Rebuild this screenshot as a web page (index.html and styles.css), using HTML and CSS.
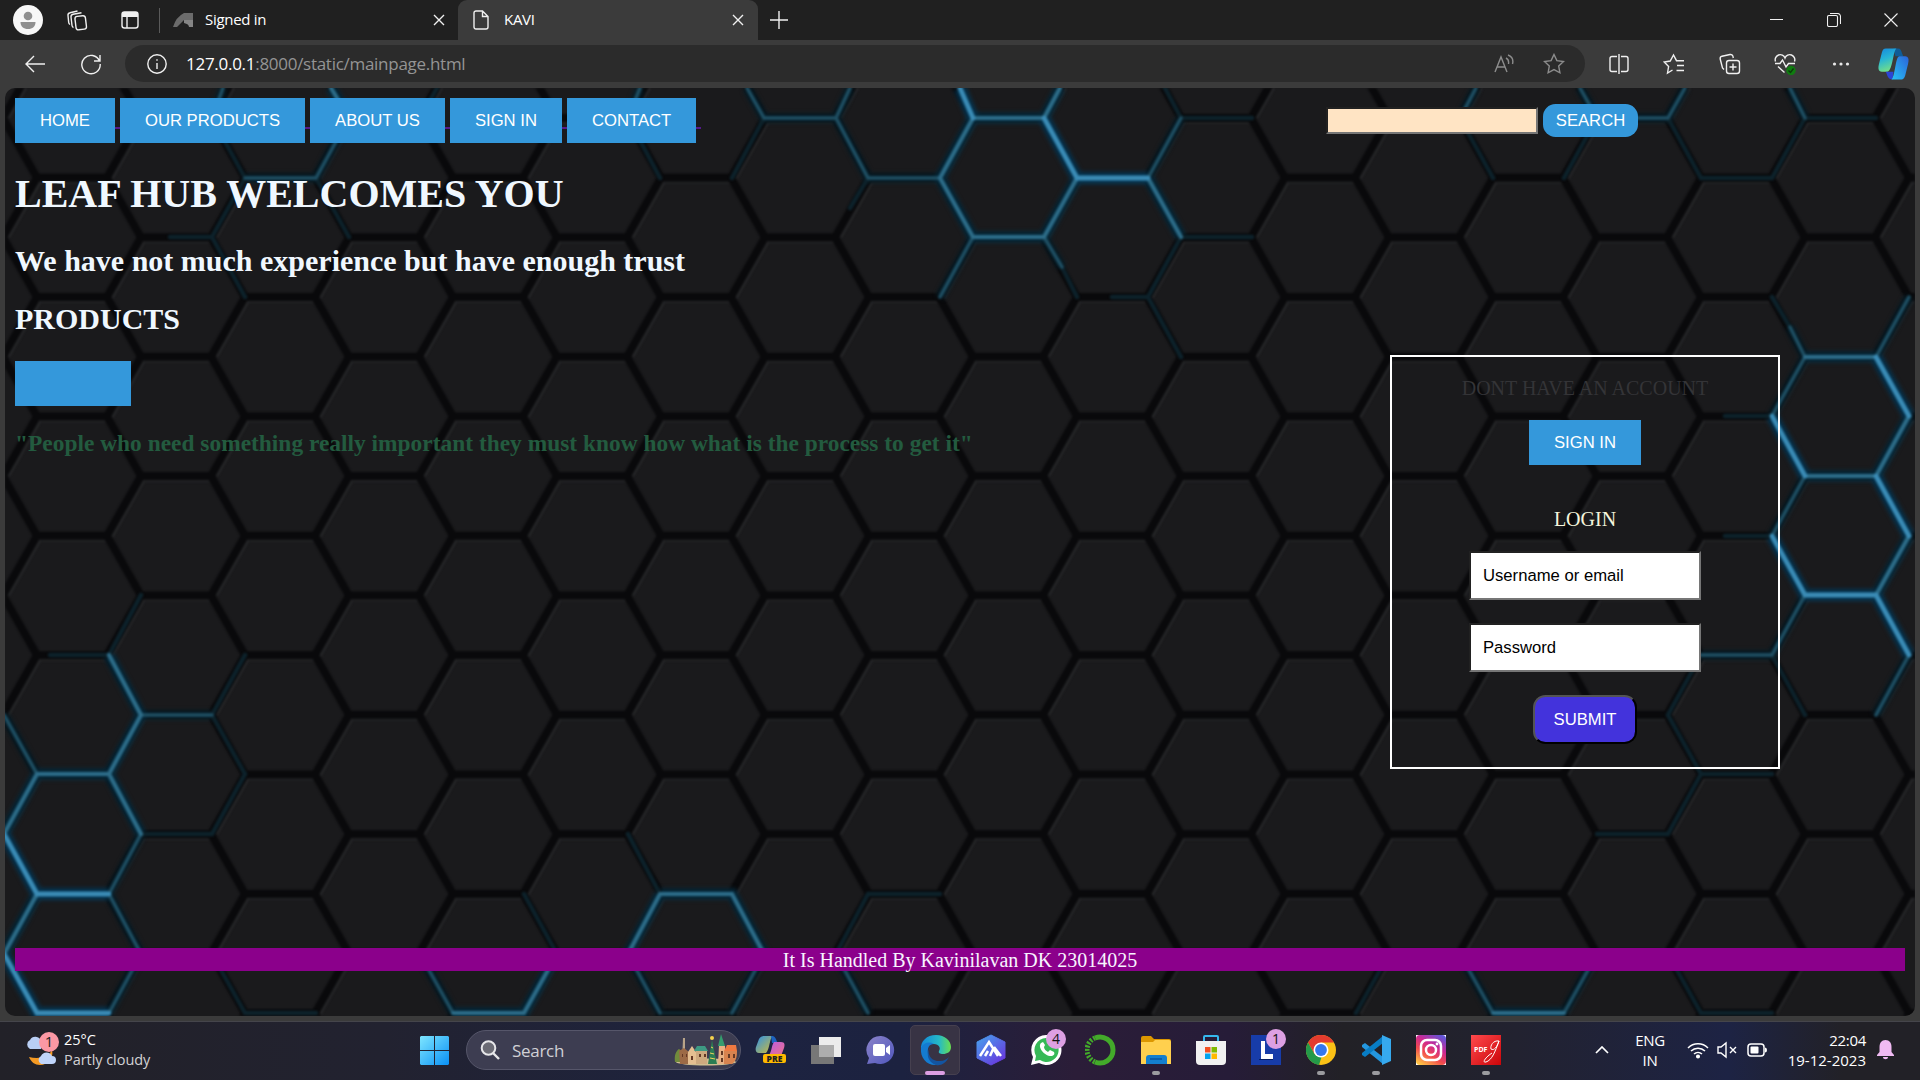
FILE: index.html
```html
<!DOCTYPE html>
<html lang="en">
<head>
<meta charset="utf-8">
<title>KAVI</title>
<link rel="stylesheet" href="styles.css">
</head>
<body>
<div class="screen">
  <div class="titlebar">
    <div class="cell avatar-cell"><svg width="30" height="30" viewBox="0 0 30 30"><circle cx="15" cy="15" r="15" fill="#f7f7f7"/><circle cx="15" cy="11" r="4.3" fill="#8f8f8f"/><path d="M7.5 17h15c0 4.500-3 7-7.500 7s-7.500-2.500-7.500-7z" fill="#8f8f8f"/></svg></div>
    <div class="cell ws-cell"><svg class="line" width="22" height="22" viewBox="0 0 22 22"><rect x="9.500" y="7" width="10.500" height="13.500" rx="2.500" transform="rotate(-7 15 14)"/><path d="M7.500 18.500a2.500 2.500 0 0 1-1.500-2L5 8a2.500 2.500 0 0 1 2-2.700l8.500-1.600M4 15.500a2.500 2.500 0 0 1-1.300-2L2 6.500a2.500 2.500 0 0 1 2-2.800L11.500 2"/></svg></div>
    <div class="cell ta-cell"><svg class="line" width="20" height="20" viewBox="0 0 20 20"><rect x="2" y="2" width="16" height="16" rx="2.500"/><path d="M2 4.500h16" stroke-width="5"/><path d="M7 5v13"/></svg></div>
    <div class="tab idle"><svg width="21" height="16" viewBox="0 0 21 16"><path d="M0 15Q3 5 11 1h9v7h-9L4 15z" fill="#6b6b6b"/><path d="M11 8h9v7h-4q0-3-5-4z" fill="#858585"/></svg><span>Signed in</span><svg class="line x" width="12" height="12" viewBox="0 0 12 12"><path d="M1 1l10 10M11 1L1 11"/></svg></div>
    <div class="tab active"><svg class="line" width="16" height="20" viewBox="0 0 16 20"><path d="M3 1h6.500L15 6.500V17a2 2 0 0 1-2 2H3a2 2 0 0 1-2-2V3a2 2 0 0 1 2-2zM9.500 1v5.500H15"/></svg><span>KAVI</span><svg class="line x" width="12" height="12" viewBox="0 0 12 12"><path d="M1 1l10 10M11 1L1 11"/></svg></div>
    <div class="cell plus"><svg class="line" width="18" height="18" viewBox="0 0 18 18"><path d="M9 0v18M0 9h18"/></svg></div>
    <div class="winctl">
      <div class="cell"><svg class="line sharp" width="14" height="14" viewBox="0 0 14 14"><path d="M0 6.500h13"/></svg></div>
      <div class="cell"><svg class="line thin" width="14" height="14" viewBox="0 0 14 14"><rect x=".5" y="2.500" width="10" height="11" rx="1.500"/><path d="M3 .5h7.500a3 3 0 0 1 3 3V11"/></svg></div>
      <div class="cell"><svg class="line thin" width="14" height="14" viewBox="0 0 14 14"><path d="M.5.5l13 13M13.500.5l-13 13"/></svg></div>
    </div>
  </div>

  <div class="toolbar">
    <div class="cell back"><svg class="line" width="20" height="18" viewBox="0 0 20 18"><path d="M9 1L1 9l8 8M1 9h19"/></svg></div>
    <div class="cell reload"><svg class="line" width="22" height="22" viewBox="0 0 22 22"><path d="M19.500 8A9.200 9.200 0 1 0 20.200 11M20 2v6h-6"/></svg></div>
    <div class="address">
      <svg class="line" width="20" height="20" viewBox="0 0 20 20"><circle cx="10" cy="10" r="9.200"/><path d="M10 9v6M10 5.200v1.600"/></svg>
      <span class="url"><b>127.0.0.1</b>:8000/static/mainpage.html</span>
      <svg class="line dim read" width="20" height="20" viewBox="0 0 20 20"><path d="M1 18L7 3l6 15M3 13h8M12 4c2 1 3 3 2.500 6M14 1c4 1.500 5.500 5 4.500 9"/></svg>
      <svg class="line dim" width="22" height="22" viewBox="0 0 22 22"><path d="M11 1.500l2.900 6.100 6.600.9-4.800 4.600 1.200 6.700L11 16.600l-5.900 3.200 1.200-6.700L1.500 8.500l6.600-.9z"/></svg>
    </div>
    <div class="tools">
      <div class="cell"><svg class="line" width="20" height="20" viewBox="0 0 20 20"><path d="M8 2.500H3a2 2 0 0 0-2 2v11a2 2 0 0 0 2 2h5M12 2.500h5a2 2 0 0 1 2 2v11a2 2 0 0 1-2 2h-5M10 0v20"/></svg></div>
      <div class="cell"><svg class="line" width="22" height="22" viewBox="0 0 22 22"><path d="M9.500 17L4.500 20 5.600 13.500 1.200 9l6-1L10.500 2l3 5.700H21M14 12.500h7M13.500 17.500H21"/></svg></div>
      <div class="cell"><svg class="line" width="22" height="22" viewBox="0 0 22 22"><rect x="7.500" y="7.500" width="13" height="13" rx="2.500"/><path d="M14 10.500v7M10.500 14h7M5 16.500L3.500 15 1.200 6a2.500 2.500 0 0 1 1.800-2.800L11 1.500a2.500 2.500 0 0 1 3 2l.3 1.500"/></svg></div>
      <div class="cell"><svg class="line" width="22" height="22" viewBox="0 0 22 22"><path d="M1.500 8.500A5 5 0 0 1 11 5a5 5 0 0 1 9.500 3.500M1 10.500h5l2.500-3.500 3.500 7 2.500-3.500H21M4 13.500l6.500 6"/><circle cx="17" cy="17.500" r="4.700" fill="#107c10" stroke="none"/><path d="M14.500 17.500l2 2 3-4" stroke="#0a3d0a"/></svg></div>
      <div class="cell"><svg width="18" height="6" viewBox="0 0 18 6" fill="#e8e8e8"><circle cx="2.500" cy="3" r="1.600"/><circle cx="9" cy="3" r="1.600"/><circle cx="15.500" cy="3" r="1.600"/></svg></div>
      <div class="cell"><svg width="31" height="32" viewBox="0 0 32 32"><defs><linearGradient id="cp1" x2=".3" y2="1"><stop offset="0" stop-color="#1688dd"/><stop offset=".5" stop-color="#27b5d5"/><stop offset="1" stop-color="#6fdc8c"/></linearGradient><linearGradient id="cp2" x1="1" x2="0" y2="1"><stop offset="0" stop-color="#2b63d9"/><stop offset="1" stop-color="#28c3f5"/></linearGradient></defs><path d="M16 0h5c2 0 3 2 3.500 4L26 8h-8z" fill="#0f5c97"/><path d="M8 0h11c-3 2-4 18-7 22-1 2-2 2-4 2H4c-4 0-4-4-3-8L4 4c1-3 2-4 4-4z" fill="url(#cp1)"/><path d="M8 24h8l-1 8c-5 0-5-4-7-8z" fill="#2b45d5"/><path d="M23 8h5c4 0 4 4 3 8l-3 12c-1 3-2 4-5 4h-9c3-3 4-18 6-22 1-2 2-2 3-2z" fill="url(#cp2)"/></svg></div>
    </div>
  </div>

  <div class="page">
    <svg class="backdrop" viewBox="5 88 1910 928" width="1910" height="928">
      <defs>
        <filter id="soft" x="-5%" y="-5%" width="110%" height="110%" color-interpolation-filters="sRGB"><feGaussianBlur stdDeviation=".9"/></filter>
        <filter id="glow" x="-5%" y="-5%" width="110%" height="110%" color-interpolation-filters="sRGB"><feGaussianBlur stdDeviation="2"/></filter>
        <pattern id="hex" x="141" y="118" width="208" height="119.360" patternUnits="userSpaceOnUse">
          <g fill="none">
            <path transform="translate(4 2.500)" stroke="#28292b" stroke-width="2.500" d="M174 59.700L208 0M104 59.700L70 119.400M-34 59.700L0 0"/>
            <path transform="translate(0 5)" stroke="#222325" stroke-width="2" d="M3 0H69M107 59.700H173M3 119.360H69"/>
            <path stroke="#09090b" stroke-width="8" stroke-linejoin="round" stroke-linecap="round" d="M-34 59.700L0 0H70L104 59.700H174L208 0M-34 59.700L0 119.360H70L104 59.700M174 59.700L208 119.360"/>
          </g>
        </pattern>
        <path id="e1" d="M960 88L973 118M1044 118L1077 178H1148M1876 357L1909 416M1876 476L1909 536M1876 595L1909 655M1772 416L1805 476M4 834L37 894H109M4 954L37 1013H109M1772 536L1805 595H1876"/>
        <path id="e2" d="M331 88L349 118M973 118L940 178L973 237H1044L1077 178M973 118H1044M1148 178L1181 237M1805 476H1876M1909 536L1876 595M37 894L4 954M1044 118L1060 88M1876 357H1805M1909 416L1876 476M37 774H109M109 655L141 715L109 774L141 834M37 774L4 834M453 1013H524L557 954M660 894H732L764 954M660 894L628 954M1493 1013H1564"/>
        <path id="e3" d="M223 88L212 118M245 178H316L349 118M628 118L640 88M747 88L764 118H836L868 178H940M836 118L850 88M1148 178L1181 118M973 237L940 297M1044 237L1062 267M1476 88L1460 118M1580 88L1597 118H1668L1685 88M1790 88L1805 118M1790 327L1805 357L1772 416M1909 297L1876 357M1805 476L1772 536M1805 595L1772 655H1701M1909 655L1876 715M141 715H212M109 894L141 954L109 1013M4 715L37 774M420 954L453 1013M628 954L660 1013M1564 1013L1597 954M1460 954L1493 1013M836 954L868 1013M732 1013L764 954M141 834L109 894"/>
        <path id="e4" d="M212 118L245 178L212 237L245 297M316 178L349 237M420 118L437 88M628 118L660 178M764 118L732 178M868 178L850 208M1181 118H1252M1181 118L1165 88M1181 237H1252M1181 237L1148 297H1112M1148 297L1181 357M1062 267L1077 297M1460 118L1493 178M1597 118L1564 178M1668 118L1701 178H1772L1805 118H1876M1772 297L1790 327M1725 416H1772M1725 536H1772M1701 655L1668 715L1701 774L1668 834H1597M1701 774H1772M1772 655L1805 715M141 595L109 655H50M245 655L212 715L245 774M245 774L212 834H141M245 1013H316M212 954L245 1013M557 954L524 894M628 834L660 894M660 1013H732M868 894L836 954M868 894H940M1668 954L1701 1013H1772M1356 1013L1389 954M170 237H212"/>
      </defs>
      <rect x="5" y="88" width="1910" height="928" fill="#1a1a1c"/>
      <rect x="5" y="88" width="1910" height="928" fill="url(#hex)" filter="url(#soft)"/>
      <g fill="none" filter="url(#glow)"><use href="#e3" stroke="#071e29" stroke-width="9"/><use href="#e2" stroke="#05293b" stroke-width="11"/><use href="#e1" stroke="#053450" stroke-width="12"/></g>
      <g fill="none" stroke-linecap="round" filter="url(#soft)">
        <use href="#e4" stroke="#0d222b" stroke-width="4.500"/>
        <use href="#e3" stroke="#1f4f63" stroke-width="3.500"/>
        <use href="#e2" stroke="#2d6c88" stroke-width="4.200"/>
        <use href="#e1" stroke="#3a8bb5" stroke-width="4.800"/>
      </g>
    </svg>

    <header class="top">
      <nav class="links"><button class="btn">HOME</button><button class="btn">OUR PRODUCTS</button><button class="btn">ABOUT US</button><button class="btn">SIGN IN</button><button class="btn">CONTACT</button></nav>
      <form class="search"><input type="text"><button class="go" type="button">SEARCH</button></form>
    </header>
    <main>
      <section class="intro">
        <h1>LEAF HUB WELCOMES YOU</h1>
        <h2>We have not much experience but have enough trust</h2>
        <h2>PRODUCTS</h2>
        <div class="block"></div>
        <h3>"People who need something really important they must know how what is the process to get it"</h3>
      </section>
      <section class="login">
        <p class="ask">DONT HAVE AN ACCOUNT</p>
        <button class="btn">SIGN IN</button>
        <p class="title">LOGIN</p>
        <input type="text" value="Username or email">
        <input type="text" value="Password">
        <button class="submit">SUBMIT</button>
      </section>
    </main>
    <footer>It Is Handled By Kavinilavan DK 23014025</footer>
  </div>

  <div class="taskbar">
    <div class="weather">
      <svg width="34" height="36" viewBox="0 0 34 36"><path d="M5 17a5 5 0 0 1 0-9 6 6 0 0 1 11 1v8z" fill="#b9cff5"/><path d="M27 18c2 8-4 15-12 15-5 0-9-3-11-8 9 2 19 1 23-7z" fill="#f59a23"/><path d="M16 32a4.500 4.500 0 0 1 0-8 6 6 0 0 1 11 0 4 4 0 0 1 0 8z" fill="#bfd4fa"/><circle cx="24" cy="10" r="10" fill="#fb98a4"/><text x="24" y="15" text-anchor="middle" font-size="15" fill="#222">1</text></svg>
      <div class="wtext"><div class="hi">25°C</div><div>Partly cloudy</div></div>
    </div>
    <svg class="start" width="29" height="29" viewBox="0 0 29 29"><defs><linearGradient id="win" x2="1" y2="1"><stop offset="0" stop-color="#7ee6ff"/><stop offset="1" stop-color="#0a90f5"/></linearGradient></defs><path fill="url(#win)" d="M1 0h13v14H0V1zM15 0h13l1 1v13H15zM0 15h14v14H1l-1-1zM15 15h14v13l-1 1H15z"/></svg>
    <div class="find">
      <svg width="20" height="20" viewBox="0 0 20 20" fill="none" stroke="#e6e6e9" stroke-width="2"><circle cx="8.500" cy="8" r="6.800" fill="#6b6b75"/><path d="M13 13l6 6" stroke-width="2.400"/></svg>
      <span>Search</span>
      <svg class="town" width="64" height="32" viewBox="0 0 64 32"><ellipse cx="32" cy="28" rx="30" ry="3.500" fill="#cfbd91"/><path d="M1 28c-1-7 1-11 4-13l4 3v10z" fill="#718b3c"/><path d="M9 4h2v26H8z" fill="#b8a489"/><path d="M5 17l5-3 5 4v12H6z" fill="#9c6a46"/><path d="M14 18l4-6 4 6v12h-8z" fill="#e5bf91"/><path d="M22 16h11v14H22z" fill="#cda97f"/><path d="M20 17l3-5h8l3 5z" fill="#3e9a83"/><path d="M34 30l4-24 5 24z" fill="#2b7d53"/><circle cx="38" cy="4" r="2" fill="#f5d34c"/><path d="M45 12h6v18h-7z" fill="#e8b184"/><path d="M44 12l3-12 4 12z" fill="#359c6e"/><path d="M50 17h13c0 6-1 10-5 13h-8z" fill="#d8834f"/><path d="M50 17l3-6h9l1 6z" fill="#ef7a41"/><path d="M17 22h2v4h-2zM25 20h2v3h-2zM30 20h2v3h-2zM47 17h2v4h-2zM54 20h2v4h-2zM59 20h2v4h-2zM8 20h1v3H8zM12 20h1v3h-1zM47 24h2v4h-2z" fill="#643825"/><path d="M37 13l2 1M36 19l4 1M36 24l5 1" stroke="#f0d25a"/></svg>
    </div>
    <div class="apps">
      <div class="app"><svg width="34" height="34" viewBox="0 0 34 34"><defs><linearGradient id="c1" y2="1"><stop offset="0" stop-color="#2d91e8"/><stop offset="1" stop-color="#d1bd38"/></linearGradient><linearGradient id="c2" y2="1"><stop offset="0" stop-color="#b85be4"/><stop offset="1" stop-color="#ef7288"/></linearGradient></defs><path d="M10 3h9c-4 3-3 13-7 17H5c-3 0-4-3-3-6l3-8c1-2 3-3 5-3z" fill="url(#c1)"/><path d="M17 3c5-1 5 5 7 7h-6z" fill="#1c62bf"/><path d="M20 9h7c4 0 4 3 3 6l-3 8H14c4-3 3-10 6-14z" fill="url(#c2)"/><rect x="9" y="21" width="23" height="9" rx="2" fill="#ffb900"/><text x="20.500" y="28.700" font-size="8.500" font-weight="800" text-anchor="middle" fill="#222">PRE</text></svg></div>
      <div class="app"><svg width="32" height="32" viewBox="0 0 32 32"><path d="M9 3h22v20H9z" fill="#ececec"/><path d="M1 11h23v19H1z" fill="#777"/><path d="M9 11h15v12H9z" fill="#adadad"/></svg></div>
      <div class="app"><svg width="30" height="30" viewBox="0 0 30 30"><defs><linearGradient id="ch" y2="1"><stop offset="0" stop-color="#8b83c9"/><stop offset="1" stop-color="#5057bd"/></linearGradient></defs><path d="M15 1a14 14 0 1 1-6 27L1 29l2-6A14 14 0 0 1 15 1z" fill="url(#ch)"/><rect x="7" y="9" width="12" height="12" rx="2" fill="#fff"/><path d="M20 13l4-3v10l-4-3z" fill="#fff"/></svg></div>
      <div class="app on"><svg width="32" height="32" viewBox="0 0 32 32"><defs><linearGradient id="ed" x2="1"><stop offset="0" stop-color="#1387d9"/><stop offset=".6" stop-color="#25b9c8"/><stop offset="1" stop-color="#69df50"/></linearGradient></defs><path d="M1 16C0 7 7 1 16 1s15 6 15 12c0 5-4 7-8 7-3 0-5-1-4-3 2-3 0-7-5-7C7 10 1 12 1 16z" fill="url(#ed)"/><path d="M1 14c2-5 8-7 13-4-5 0-7 4-6 10s5 9 9 11C7 32 0 24 1 14z" fill="#147bd0"/><path d="M12 12c-7 5-2 16 8 15 4 0 7-2 9-4-3 6-8 9-13 8-9-3-11-14-4-19z" fill="#1354a0"/></svg><i class="mark wide"></i></div>
      <div class="app"><svg width="30" height="32" viewBox="0 0 30 32"><defs><linearGradient id="aa" x2=".8" y2="1"><stop offset="0" stop-color="#45a5ed"/><stop offset="1" stop-color="#6937df"/></linearGradient></defs><path d="M15 1l14 7v16l-14 7-14-7V8z" fill="url(#aa)" stroke="url(#aa)" stroke-linejoin="round"/><path d="M4 22l9-14 9 14M14 22l4-9M18 13l7 9M9 22l3-5" fill="none" stroke="#fff" stroke-width="2.500"/></svg></div>
      <div class="app"><svg width="32" height="32" viewBox="0 0 32 32"><path d="M16 1a15 15 0 1 1-7 28L1 31l2-8A15 15 0 0 1 16 1z" fill="#fff"/><path d="M16 4a12 12 0 1 1-6 22l-5 1 1-5A12 12 0 0 1 16 4z" fill="#36b957"/><path d="M11 9c-4 4 4 14 11 13 2-1 3-2 2-4l-4-2-2 2c-2-1-4-3-4-5l1-2-2-3z" fill="#fff"/></svg><span class="badge">4</span></div>
      <div class="app"><svg width="32" height="32" viewBox="0 0 32 32" fill="none" stroke="#43aa2a"><path d="M10 4a13 13 0 1 1 0 24" stroke-width="5"/><path d="M10 4a13 13 0 0 0 0 24" stroke-width="5" stroke-dasharray="2 1.500"/></svg></div>
      <div class="app"><svg width="32" height="32" viewBox="0 0 32 32"><path d="M1 4q0-2 2-2h8l3 3h15q2 0 2 2v6H1z" fill="#dc9700"/><path d="M1 8h12l2-2h14q2 0 2 2v22H1z" fill="#ffd04e"/><path d="M6 24q0-3 3-3h15q3 0 3 3v6H6z" fill="#147fce"/><path d="M10 25h12" stroke="#0754a0" stroke-width="1.500"/></svg><i class="mark"></i></div>
      <div class="app"><svg width="32" height="32" viewBox="0 0 32 32"><path d="M9 8V3q0-1 1-1h12q1 0 1 1v5" stroke="#35b8ed" stroke-width="2" fill="none"/><path d="M1 7h30v20q0 4-4 4H5q-4 0-4-4z" fill="#f1f1f1"/><path d="M10 13h5.500v5.500H10z" fill="#f25022"/><path d="M16.500 13H22v5.500h-5.500z" fill="#7fba00"/><path d="M10 19.500h5.500V25H10z" fill="#00a4ef"/><path d="M16.500 19.500H22V25h-5.500z" fill="#ffb900"/></svg></div>
      <div class="app"><svg width="30" height="30" viewBox="0 0 30 30"><path d="M0 0h30v30H0z" fill="#173ca9"/><path d="M10 6h4v13h8v5H10z" fill="#fff"/><path d="M8 24h14v1H8z" fill="#061f65"/></svg><span class="badge">1</span></div>
      <div class="app"><svg width="30" height="30" viewBox="0 0 30 30"><circle cx="15" cy="15" r="15" fill="#fbc116"/><path d="M2 7.500a15 15 0 0 1 26 0H15L8.500 19z" fill="#e33b2e"/><path d="M2 7.500L8.500 19l7 3L13 30A15 15 0 0 1 2 7.500z" fill="#249a49"/><circle cx="15" cy="15" r="7.500" fill="#fff"/><circle cx="15" cy="15" r="5.900" fill="#3477ed"/></svg><i class="mark"></i></div>
      <div class="app"><svg width="30" height="30" viewBox="0 0 30 30"><path d="M1 10l3-2 18 14v7L1 12z" fill="#2497df"/><path d="M1 20l3 2L22 8V1L1 18z" fill="#087dc5"/><path d="M21 0l9 4v22l-9 4z" fill="#36a9ee"/></svg><i class="mark"></i></div>
      <div class="app"><svg width="30" height="30" viewBox="0 0 30 30"><defs><linearGradient id="ig" x1=".2" y1="1" x2=".8" y2="0"><stop offset="0" stop-color="#ffc346"/><stop offset=".35" stop-color="#f24a4d"/><stop offset=".65" stop-color="#cb2894"/><stop offset="1" stop-color="#6256d7"/></linearGradient></defs><path fill="#fff" d="M0 0h30v30H0z"/><rect width="30" height="30" rx="4" fill="url(#ig)"/><g fill="none" stroke="#fff" stroke-width="2.500"><rect x="5" y="5" width="20" height="20" rx="6"/><circle cx="15" cy="15" r="5"/></g><circle cx="21" cy="9" r="1.400" fill="#fff"/></svg></div>
      <div class="app"><svg width="30" height="30" viewBox="0 0 30 30"><defs><linearGradient id="pd" y2="1"><stop offset="0" stop-color="#ff4a4d"/><stop offset="1" stop-color="#cb0509"/></linearGradient></defs><path d="M0 0h30v30H0z" fill="url(#pd)"/><text x="3" y="17" font-size="7" font-weight="700" fill="#fff">PDF</text><path d="M28 6c-6-1-9 5-8 8 3 2 6-2 8-8-4 11-7 19-13 21-5 1 1-6 6-9" fill="none" stroke="#fff"/></svg><i class="mark"></i></div>
    </div>
    <div class="tray">
      <svg class="chev" width="14" height="8" viewBox="0 0 14 8"><path d="M1 7l6-6 6 6" fill="none" stroke="#fff" stroke-width="1.700"/></svg>
      <div class="lang">ENG<br>IN</div>
      <svg class="wifi" width="22" height="18" viewBox="0 0 22 18" fill="none" stroke="#fff" stroke-width="1.500"><path d="M1 7a14 14 0 0 1 20 0M4 10a10 10 0 0 1 14 0M7 13a6 6 0 0 1 8 0"/><circle cx="11" cy="15.500" r="1.300" fill="#fff"/></svg>
      <svg class="spk" width="21" height="18" viewBox="0 0 21 18" fill="none" stroke="#fff" stroke-width="1.400"><path d="M1 6h3l5-4v14l-5-4H1zM13 6l6 6M19 6l-6 6"/></svg>
      <svg class="bat" width="20" height="14" viewBox="0 0 20 14"><rect x="1" y="1" width="16" height="12" rx="3" fill="none" stroke="#fff" stroke-width="1.500"/><rect x="3.500" y="3.500" width="8" height="7" rx="1" fill="#fff"/><path d="M18 4.500q2 0 2 2.500t-2 2.500z" fill="#fff"/></svg>
      <div class="clock">22:04<br><span>19-12-2023</span></div>
      <svg class="bell" width="17" height="20" viewBox="0 0 17 20" fill="#f0baf2"><path d="M8.500 0c4 0 6 3 6 7v5l2.500 3v1H0v-1l2.500-3V7c0-4 2-7 6-7z"/><path d="M6 17h5c0 3-5 3-5 0z"/></svg>
    </div>
  </div>
</div>
</body>
</html>
```
FILE: styles.css
```css
* { box-sizing: border-box; }
body { margin: 0; overflow: hidden; background: #3b3b3b; }
.screen { width: 1920px; height: 1080px; display: flex; flex-direction: column; font-family: "Open Sans", "Noto Sans", sans-serif; color: #fff; }
svg { display: block; flex: none; }
.cell { display: flex; align-items: center; justify-content: center; flex: none; }
.line { fill: none; stroke: #f0f0f0; stroke-width: 1.4; }
.line.dim { stroke: #8d8d8d; }
.line.thin { stroke-width: 1.1; }
.line.sharp { stroke-width: 1; }

/* browser frame */
.titlebar { height: 40px; background: #202020; display: flex; flex: none; }
.avatar-cell { width: 56px; }
.ws-cell { width: 42px; }
.ta-cell { width: 62px; padding-left: 2px; background: linear-gradient(#5a5a5a, #5a5a5a) right center / 1px 25px no-repeat; }
.tab { display: flex; align-items: center; height: 40px; font-size: 15px; letter-spacing: -.3px; flex: none; }
.tab span { flex: 1; line-height: 38px; padding-bottom: 2px; }
.idle { width: 298px; padding: 0 13px; }
.idle svg:first-child { margin-right: 11px; }
.active { width: 300px; padding: 0 14px 0 15px; background: #3b3b3b; border-radius: 9px 9px 0 0; }
.active svg:first-child { margin-right: 15px; }
.plus { width: 42px; }
.winctl { margin-left: auto; margin-right: 1px; display: flex; }
.winctl .cell { width: 57px; }
.toolbar { height: 48px; background: #3b3b3b; display: flex; align-items: center; flex: none; }
.back { width: 69px; }
.reload { width: 43px; margin-right: 13px; }
.address { width: 1460px; height: 37px; margin: 0 6px 1px 0; border-radius: 19px; background: #2b2b2b; display: flex; align-items: center; padding: 0 20px 0 22px; }
.url { flex: 1; margin-left: 19px; padding-bottom: 1px; font-size: 17px; letter-spacing: -.28px; color: #949494; }
.url b { font-weight: 400; color: #fff; }
.read { margin-right: 29px; }
.tools { display: flex; }
.tools .cell { width: 55.5px; }
.tools .cell:last-child { width: 50px; }

/* web page */
.page { position: relative; overflow: hidden; width: 1910px; height: 928px; margin: 0 5px 5px; padding: 10px 10px 45px; border-radius: 10px; flex: none; display: flex; flex-direction: column; font: 20px "Liberation Serif", serif; }
.page > :not(.backdrop) { position: relative; }
.page > .backdrop { position: absolute; inset: 0; }
.page button, .page input { font: 16.667px "Liberation Sans", sans-serif; }
.top { display: flex; justify-content: space-between; align-items: center; height: 45px; }
.links { display: flex; gap: 5px; padding-right: 5px; background: linear-gradient(#551a8b, #551a8b) 0 29px / 100% 2px no-repeat; }
.btn { height: 45px; padding: 0 25px; border: 0; background: #3498db; color: #fff; }
.search { display: flex; align-items: center; gap: 5px; margin-right: 267px; }
.search input { width: 212px; height: 27px; background: #ffe4c4; border: 2px inset #767676; }
.search .go { width: 95px; height: 33px; padding: 0; border: 0; border-radius: 12.5px; background: #3498db; color: #fff; }
main { flex: 1; display: flex; justify-content: space-between; align-items: flex-start; }
.intro { color: #f0f8ff; }
h1 { margin: 28px 0 27px; font-size: 40px; line-height: 46px; }
h2 { margin: 0 0 24px; font-size: 30px; line-height: 34px; }
.block { width: 116px; height: 45px; margin: 25px 0 24px; background: #3498db; }
h3 { margin: 0; font-size: 23.4px; line-height: 27px; letter-spacing: .01px; color: #235b3f; }
.login { width: 390px; height: 414px; margin: 212px 125px 0 0; border: 2px solid #fff; display: flex; flex-direction: column; align-items: center; padding-top: 20px; }
.login p { margin: 0; line-height: 23px; }
.ask { color: #343437; }
.login .btn { margin-top: 20px; }
.login .title { margin: 43px 0 20px; color: #f5f5dc; }
.login input { width: 232px; height: 49px; margin-bottom: 23px; padding: 0 12px; border: 2px inset #767676; background: #fff; color: #000; }
.login .submit { width: 104px; height: 49px; padding: 0; border: 2px outset #000; border-radius: 12.5px; background: #4333dc; color: #fff; }
footer { height: 23px; line-height: 24px; text-align: center; color: #f8f4ff; background: #8b008b; }

/* taskbar */
.taskbar { height: 59px; flex: none; display: flex; align-items: center; padding-bottom: 2px; border-top: 1px solid #45454b; background: linear-gradient(90deg, #222128 0, #222230 20%, #1d2340 39%, #1c2240 47%, #2b1d38 56%, #261c38 64%, #222126 70%, #222230 79%, #1d2344 90%, #222127 96%); }
.weather { width: 420px; display: flex; align-items: center; padding-left: 25px; gap: 5px; font-size: 14.5px; line-height: 20px; letter-spacing: -.05px; color: #d2d2d5; }
.weather .hi { color: #fff; }
.start { margin-right: 17px; }
.find { width: 275px; height: 40px; border-radius: 20px; border: 1px solid #56566a; background: #3d3d51; display: flex; align-items: center; padding: 0 2px 0 13px; }
.find span { flex: 1; margin-left: 12px; font-size: 17px; color: #d0d0d5; letter-spacing: -.3px; }
.apps { display: flex; margin-left: 2px; }
.app { position: relative; width: 55px; height: 50px; display: flex; align-items: center; justify-content: center; }
.app.on::before { content: ""; position: absolute; inset: 0 3px 0 2px; border: 1px solid #46404f; border-radius: 5px; background: #383344; }
.app svg { position: relative; }
.mark { position: absolute; bottom: 0; left: 24px; width: 8px; height: 4px; border-radius: 2px; background: #9b9b9f; }
.mark.wide { left: 17px; width: 20px; background: #dd9fe3; }
.badge { position: absolute; top: 4px; right: 7px; width: 20px; height: 20px; border-radius: 50%; background: #dda0e3; color: #111; font-size: 14px; line-height: 20px; text-align: center; }
.tray { margin-left: auto; padding-right: 26px; display: flex; align-items: center; font-size: 15px; line-height: 20px; letter-spacing: -.3px; }
.lang { width: 60px; margin-left: 11px; text-align: center; }
.wifi { margin-left: 7px; }
.spk { margin-left: 8px; }
.bat { margin-left: 9px; }
.clock { width: 99px; text-align: right; }
.clock span { letter-spacing: 0; }
.bell { margin-left: 11px; }
```
